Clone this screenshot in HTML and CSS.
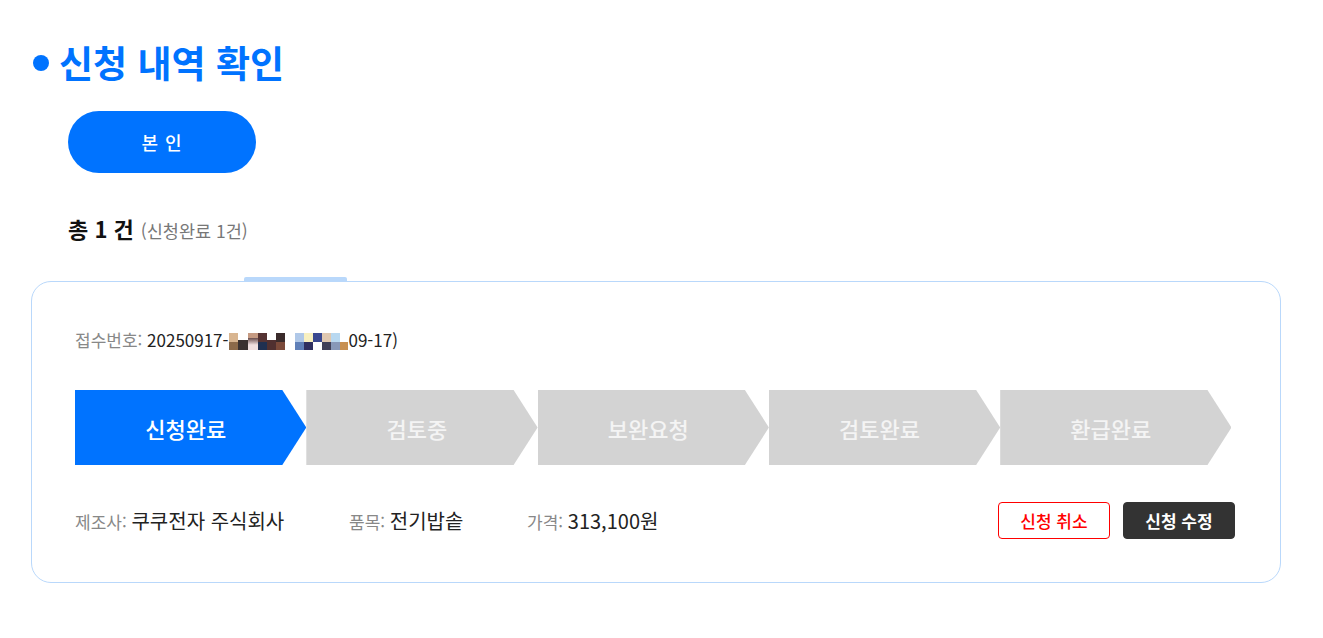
FILE: index.html
```html
<!DOCTYPE html>
<html lang="ko">
<head>
<meta charset="utf-8">
<title>신청 내역 확인</title>
<link rel="stylesheet" href="styles.css">
</head>
<body>
<div class="page">
  <h1 class="title"><span class="dot"></span>신청 내역 확인</h1>
  <div class="tabs">
    <button class="pill">본 인</button>
  </div>
  <div class="count"><strong>총 1 건</strong> <span class="sub">(신청완료 1건)</span></div>
  <div class="card-wrap">
    <div class="card-tab"></div>
    <div class="card">
      <div class="receipt"><span class="lbl">접수번호:</span> <span class="val">20250917-<span class="mosaic"><i class="m1"></i><i class="m2"></i><i class="m3"></i><i class="m4"></i><i class="m5"></i><i class="m6"></i><i class="gap"></i><i class="m7"></i><i class="m8"></i><i class="m9"></i><i class="m10"></i><i class="m11"></i><i class="m12"></i></span>09-17)</span></div>
      <div class="steps">
        <div class="step active">신청완료</div>
        <div class="step">검토중</div>
        <div class="step">보완요청</div>
        <div class="step">검토완료</div>
        <div class="step">환급완료</div>
      </div>
      <div class="info">
        <div class="field f1"><span class="lbl">제조사:</span> <span class="val">쿠쿠전자 주식회사</span></div>
        <div class="field f2"><span class="lbl">품목:</span> <span class="val">전기밥솥</span></div>
        <div class="field"><span class="lbl">가격:</span> <span class="val">313,100원</span></div>
        <div class="actions">
          <button class="btn cancel">신청 취소</button>
          <button class="btn edit">신청 수정</button>
        </div>
      </div>
    </div>
  </div>
</div>
</body>
</html>
```
FILE: styles.css
```css
* { box-sizing: border-box; }
html, body { margin: 0; padding: 0; background: #fff; }
body {
  font-family: "Noto Sans CJK KR", "Noto Sans", sans-serif;
  color: #222;
}
.page { padding: 40px 42px 0 31px; }
.title {
  display: flex;
  align-items: center;
  margin: 0;
  font-size: 37px;
  font-weight: 700;
  color: #0073ff;
  line-height: 44px;
}
.dot {
  width: 16px;
  height: 16px;
  border-radius: 50%;
  background: #0073ff;
  margin: 2px 10px 0 2px;
}
.tabs { padding: 27px 0 0 37px; }
.pill {
  width: 188px;
  height: 62px;
  border: none;
  border-radius: 31px;
  background: #0073ff;
  color: #fff;
  font-family: inherit;
  font-size: 18px;
  font-weight: 500;
  letter-spacing: 1px;
}
.count {
  padding: 38px 0 0 37px;
  line-height: 34px;
  display: flex;
  align-items: baseline;
  gap: 7px;
}
.count strong { font-size: 22px; font-weight: 700; color: #111; }
.count .sub { font-size: 17.5px; color: #777; }
.card-wrap { margin-top: 29px; position: relative; }
.card-tab {
  width: 103px;
  height: 4px;
  margin-left: 213px;
  background: #b9d8fb;
  border-radius: 2px 2px 0 0;
}
.card {
  border: 1px solid #b9d8fb;
  border-radius: 20px;
  padding: 46px 45px 42px 43px;
  height: 302px;
}
.lbl { color: #888; }
.val { color: #222; }
.receipt { font-size: 17px; line-height: 24px; }
.receipt .val { font-size: 17px; }
.mosaic { display: inline-flex; vertical-align: -3px; height: 17px; margin-left: 1px; }
.mosaic i { display: block; width: 9px; height: 17px; }
.m1 { background: linear-gradient(#d8b590 50%, #8c6a4a 50%); }
.m2 { background: linear-gradient(#ffffff 40%, #3a3130 40%); width: 10px !important; }
.m3 { background: linear-gradient(#c59a82 30%, #6a4e4e 30%, #f0e0e0 70%); width: 10px !important; }
.m4 { background: linear-gradient(#553333 50%, #203050 50%); }
.m5 { background: linear-gradient(#ffffff 40%, #503030 40%); }
.m6 { background: linear-gradient(#3a2b2b 50%, #7b4a3a 50%); }
.gap { width: 10px !important; background: #fff; }
.m7 { background: linear-gradient(#b0c8e8 50%, #6080b8 50%); }
.m8 { background: linear-gradient(#f8f0c0 50%, #303060 50%); }
.m9 { background: linear-gradient(#3a4890 50%, #ffffff 50%); }
.m10 { background: linear-gradient(#e0c8b0 50%, #404058 50%); }
.m11 { background: linear-gradient(#b8d8f0 50%, #8898b8 50%); }
.m12 { background: linear-gradient(#ffffff 50%, #c89050 50%); width: 8px !important; }
.steps {
  display: flex;
  margin-top: 38px;
}
.step {
  width: 231px;
  flex: 0 0 231.3px;
  height: 75px;
  background: #d3d3d3;
  color: #f4f4f4;
  font-size: 22px;
  font-weight: 500;
  display: flex;
  align-items: center;
  justify-content: center;
  padding-right: 10px;
  clip-path: polygon(0 0, calc(100% - 24px) 0, 100% 50%, calc(100% - 24px) 100%, 0 100%);
}
.step.active { background: #0073ff; color: #fff; }
.info {
  display: flex;
  align-items: center;
  margin-top: 37px;
  height: 37px;
}
.field { font-size: 17px; }
.field .val { font-size: 20px; color: #222; }
.f1 { width: 274px; }
.f2 { width: 178px; }
.actions { margin-left: auto; display: flex; gap: 13px; }
.btn {
  width: 112px;
  height: 37px;
  border-radius: 4px;
  font-family: inherit;
  font-size: 17px;
  font-weight: 500;
  cursor: pointer;
}
.cancel { background: #fff; border: 1px solid #ff0000; color: #ff0000; }
.edit { background: #333; border: 1px solid #333; color: #fff; font-weight: 700; }
```
